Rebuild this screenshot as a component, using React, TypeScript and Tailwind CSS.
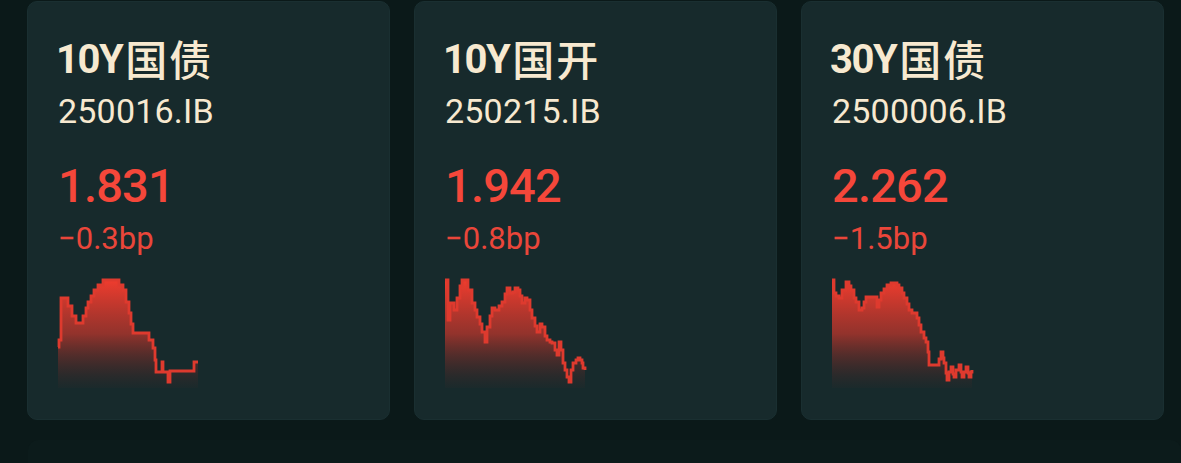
import React from "react";

type Bond = {
  name: string;
  cjk: string;
  code: string;
  price: string;
  change: string;
  pts: [number, number][];
};

const bonds: Bond[] = [
  {
    name: "10Y",
    cjk: "国债",
    code: "250016.IB",
    price: "1.831",
    change: "−0.3bp",
    pts: [
      [0, 67], [1, 60], [3, 18], [8, 18], [10, 26], [14, 36], [18, 43], [23, 43], [25, 36],
      [28, 28], [30, 22], [33, 16], [36, 10], [40, 5], [45, 0], [58, 0], [61, 5], [65, 10],
      [68, 22], [71, 33], [73, 44], [75, 53], [84, 53], [88, 53], [91, 60], [95, 68], [97, 80],
      [98, 92], [103, 92], [104, 82], [105, 92], [110, 92], [110, 102], [112, 102], [112, 91],
      [135, 91], [136, 82], [140, 82],
    ],
  },
  {
    name: "10Y",
    cjk: "国开",
    code: "250215.IB",
    price: "1.942",
    change: "−0.8bp",
    pts: [
      [0, 0], [2, 0], [3, 40], [5, 23], [7, 23], [9, 30], [12, 18], [15, 6], [17, 0], [20, 0],
      [23, 10], [27, 23], [30, 30], [32, 37], [35, 44], [37, 52], [40, 62], [42, 47], [45, 36],
      [47, 28], [50, 30], [54, 26], [57, 22], [60, 14], [62, 8], [65, 13], [68, 12], [70, 8],
      [73, 10], [75, 16], [77, 23], [80, 18], [82, 20], [85, 30], [87, 38], [90, 46], [92, 52],
      [95, 44], [97, 47], [100, 56], [102, 60], [105, 62], [107, 63], [110, 70], [112, 75],
      [114, 62], [116, 70], [118, 83], [120, 90], [122, 97], [124, 102], [126, 90], [128, 83],
      [131, 80], [133, 78], [135, 80], [137, 83], [138, 88], [140, 90],
    ],
  },
  {
    name: "30Y",
    cjk: "国债",
    code: "2500006.IB",
    price: "2.262",
    change: "−1.5bp",
    pts: [
      [0, 0], [2, 13], [4, 16], [7, 18], [10, 10], [14, 2], [17, 6], [19, 10], [22, 18],
      [24, 22], [27, 30], [30, 28], [32, 22], [34, 17], [42, 17], [45, 27], [47, 20], [49, 13],
      [52, 9], [55, 5], [59, 3], [62, 3], [65, 5], [67, 8], [70, 13], [72, 18], [75, 24],
      [77, 30], [80, 33], [85, 38], [87, 45], [89, 52], [92, 58], [94, 62], [96, 72], [97, 85],
      [105, 85], [107, 79], [109, 72], [111, 78], [112, 83], [114, 93], [115, 100], [117, 92],
      [119, 87], [121, 94], [122, 97], [124, 90], [127, 85], [129, 92], [130, 97], [132, 92],
      [134, 87], [136, 93], [137, 97], [139, 92], [140, 90],
    ],
  },
];

function Spark({ pts, id }: { pts: [number, number][]; id: string }) {
  let line = `M${pts[0][0]} ${pts[0][1]}`;
  for (let i = 1; i < pts.length; i++) {
    line += ` H${pts[i][0]} V${pts[i][1]}`;
  }
  const area = `${line} V108 H0 Z`;
  return (
    <svg width="140" height="108" viewBox="0 0 140 108" className="block overflow-visible">
      <defs>
        <linearGradient id={id} x1="0" y1="0" x2="0" y2="1">
          <stop offset="0" stopColor="#ef3c2e" stopOpacity="1" />
          <stop offset="0.5" stopColor="#c2362c" stopOpacity="0.72" />
          <stop offset="1" stopColor="#5a2624" stopOpacity="0.06" />
        </linearGradient>
      </defs>
      <path d={area} fill={`url(#${id})`} />
      <path d={line} fill="none" stroke="#de3a2e" strokeWidth="2.8" strokeLinejoin="miter" />
    </svg>
  );
}

function Card({ b, i }: { b: Bond; i: number }) {
  return (
    <div className="w-[363px] h-[419px] shrink-0 rounded-[10px] bg-[#172a2c] border border-[#1a2f31] pl-[30px] pt-[34px] flex flex-col">
      <div className="h-[48px] leading-[48px] text-[40px] font-bold text-[#f7e9d0] tracking-[-1.5px] whitespace-nowrap -ml-[2px]">
        {b.name}
        <span className="font-['Noto_Sans_CJK_SC'] text-[42px] leading-[0px] font-medium tracking-[2px] ml-[3px] align-[-3px]">
          {b.cjk}
        </span>
      </div>
      <div className="mt-[7px] h-[40px] leading-[40px] text-[34px] font-normal text-[#f7e9d0] tracking-[0.2px] whitespace-nowrap">
        {b.code}
      </div>
      <div className="mt-[27px] h-[56px] leading-[56px] text-[47px] font-medium text-[#f5473a] tracking-[-0.8px]">
        {b.price}
      </div>
      <div className="mt-[7px] h-[36px] leading-[36px] text-[31px] font-normal text-[#ea463a]">
        {b.change}
      </div>
      <div className="mt-[23px]">
        <Spark pts={b.pts} id={`g${i}`} />
      </div>
    </div>
  );
}

export default function App() {
  return (
    <div className="w-[1181px] h-[463px] overflow-hidden bg-[#0b1919] font-[Roboto,'Noto_Sans_CJK_SC',sans-serif]">
      <div className="flex gap-[24px] pl-[27px] pt-px">
        {bonds.map((b, i) => (
          <Card key={i} b={b} i={i} />
        ))}
      </div>
      <div className="ml-[28px] mt-[20px] h-[30px] rounded-t-[10px] bg-[#0c1b1b]" />
    </div>
  );
}
